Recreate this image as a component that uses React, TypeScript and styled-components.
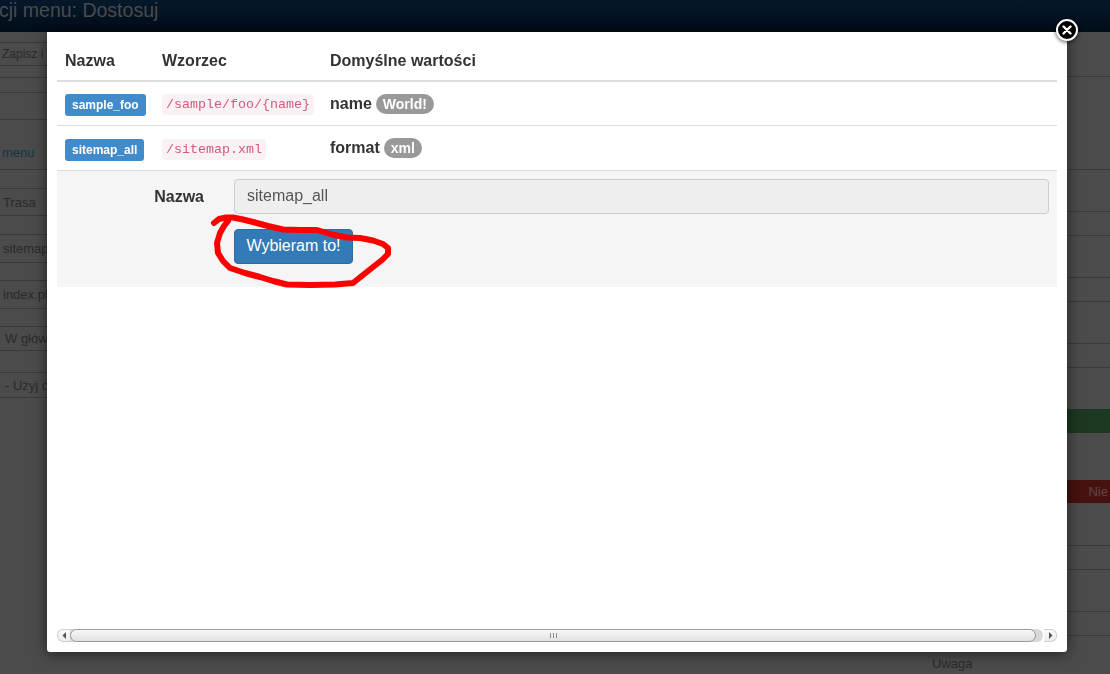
import React from 'react'
import styled, { createGlobalStyle } from 'styled-components'

const GlobalStyle = createGlobalStyle`
  html, body {
    margin: 0;
    padding: 0;
    height: 100%;
    overflow: hidden;
    background: #4b4b4b;
  }
  * {
    box-sizing: border-box;
  }
`

const Page = styled.div`
  width: 1110px;
  height: 674px;
  overflow: hidden;
  font-family: "Liberation Sans", Arial, sans-serif;
  background: #4b4b4b;
`

const Navbar = styled.div`
  height: 32px;
  background: linear-gradient(to bottom, #05192c, #020c17);
  color: #484b4e;
  font-size: 19.5px;
  line-height: 21px;
  text-indent: -1px;
  white-space: nowrap;
  overflow: hidden;
`

const Behind = styled.div`
  display: flex;
  justify-content: space-between;
`

const LeftColumn = styled.div`
  width: 47px;
  overflow: hidden;
`

const RightColumn = styled.div`
  width: 178px;
  overflow: hidden;
`

const BehindRow = styled.div<{ $h: number; $plain?: boolean; $bg?: string; $indent?: number; $size?: number }>`
  height: ${p => p.$h}px;
  display: flex;
  align-items: center;
  padding-left: ${p => p.$indent ?? 3}px;
  font-size: ${p => p.$size ?? 13}px;
  color: #2a2a2a;
  white-space: nowrap;
  background: ${p => p.$bg ?? 'transparent'};
  border-bottom: 1px solid ${p => (p.$plain ? 'transparent' : '#3a3a3a')};
`

const MenuLink = styled.span`
  color: #0f3646;
`

const NieText = styled.span`
  margin-left: auto;
  margin-right: 2px;
  color: #634545;
`

const Modal = styled.div`
  position: fixed;
  left: 47px;
  top: 32px;
  width: 1020px;
  height: 620px;
  padding: 10px;
  background: #fff;
  border-radius: 0 0 3px 3px;
  box-shadow: 0 2px 14px rgba(0, 0, 0, 0.55);
  color: #333;
`

const CloseButton = styled.button`
  position: absolute;
  right: -11px;
  top: -13px;
  width: 22px;
  height: 22px;
  padding: 0;
  border: 2px solid #fff;
  border-radius: 50%;
  background: #000;
  box-shadow: 0 1px 4px rgba(0, 0, 0, 0.7);
  display: flex;
  align-items: center;
  justify-content: center;
`

const Table = styled.table`
  width: 1000px;
  border-collapse: collapse;
  table-layout: fixed;
  font-size: 16px;

  th {
    height: 39px;
    padding: 0 8px;
    text-align: left;
    font-weight: bold;
    border-bottom: 2px solid #ddd;
  }

  td {
    height: 44px;
    padding: 12px 8px 0;
    vertical-align: top;
    border-bottom: 1px solid #ddd;
    font-weight: bold;
    line-height: 20px;
    white-space: nowrap;
  }

  tbody tr:last-child td {
    height: 45px;
  }
`

const RouteLabel = styled.span<{ $low?: boolean }>`
  display: block;
  width: fit-content;
  height: 22px;
  margin-top: ${p => (p.$low ? 1 : 0)}px;
  padding: 0 7px;
  border-radius: 3px;
  background: #428bca;
  color: #fff;
  font-size: 12px;
  font-weight: bold;
  line-height: 22px;
`

const Pattern = styled.code<{ $low?: boolean }>`
  display: block;
  width: fit-content;
  height: 21px;
  margin-top: ${p => (p.$low ? 1 : 0)}px;
  padding: 0 4px;
  border-radius: 4px;
  background: #f9f2f4;
  color: #d6587c;
  font-family: "Liberation Mono", "Courier New", monospace;
  font-size: 13.33px;
  font-weight: normal;
  line-height: 21px;
`

const Badge = styled.span`
  display: inline-block;
  height: 20px;
  margin-left: 4px;
  padding: 0 7px;
  border-radius: 10px;
  background: #999;
  color: #fff;
  font-size: 14px;
  font-weight: bold;
  line-height: 20px;
  vertical-align: top;
`

const FormPanel = styled.form`
  height: 116px;
  padding: 8px 8px 0 0;
  background: #f5f5f5;
`

const FormRow = styled.div`
  display: flex;
  align-items: center;
  margin-bottom: 15px;
`

const FieldLabel = styled.label`
  width: 147px;
  margin-right: 30px;
  padding-top: 1px;
  text-align: right;
  font-size: 16px;
  font-weight: bold;
`

const Input = styled.input`
  flex: 1;
  height: 35px;
  padding: 0 12px;
  border: 1px solid #ccc;
  border-radius: 4px;
  background: #eee;
  color: #555;
  font-family: inherit;
  font-size: 16px;
`

const SubmitButton = styled.button`
  width: 119px;
  height: 35px;
  margin-left: 177px;
  padding: 0;
  border: 1px solid #2e6da4;
  border-radius: 4px;
  background: #337ab7;
  color: #fff;
  font-family: inherit;
  font-size: 16px;
`

const Scrollbar = styled.div`
  position: absolute;
  left: 10px;
  right: 10px;
  bottom: 10px;
  height: 13px;
  display: flex;
`

const ScrollArrow = styled.div`
  width: 13px;
  height: 13px;
  background: linear-gradient(to bottom, #fafafa, #ececec);
  border: 1px solid #cfcfcf;
  display: flex;
  align-items: center;
  justify-content: center;
`

const ArrowLeft = styled(ScrollArrow)`
  border-radius: 6px 0 0 6px;
  border-right: 0;
`

const ArrowRight = styled(ScrollArrow)`
  border-radius: 0 6px 6px 0;
  border-left: 0;
`

const Track = styled.div`
  flex: 1;
  display: flex;
  background: #d9d8d5;
  border-radius: 0 6px 6px 0;
  margin-right: 1px;
`

const Thumb = styled.div`
  width: 966px;
  border: 1px solid #9a9a98;
  border-radius: 7px;
  background: linear-gradient(to bottom, #f7f7f5, #e2e1de);
  display: flex;
  align-items: center;
  justify-content: center;
  gap: 2px;
`

const Grip = styled.i`
  display: block;
  width: 1px;
  height: 5px;
  background: #8f8f8f;
`

const Scribble = styled.svg`
  position: fixed;
  left: 0;
  top: 0;
  pointer-events: none;
`

const leftRows: { h: number; text?: React.ReactNode; plain?: boolean; indent?: number; size?: number }[] = [
  { h: 11 },
  { h: 23, text: 'Zapisz i', indent: 2, size: 12 },
  { h: 12 },
  { h: 15 },
  { h: 27 },
  { h: 15, plain: true },
  { h: 35, text: <MenuLink>menu</MenuLink>, indent: 2 },
  { h: 19 },
  { h: 27, text: 'Trasa' },
  { h: 19 },
  { h: 28, text: 'sitemap' },
  { h: 18 },
  { h: 28, text: 'index.php' },
  { h: 18 },
  { h: 24, text: 'W głównym', indent: 5 },
  { h: 22 },
  { h: 25, text: '- Użyj ok', indent: 5 },
]

const rightRows: { h: number; text?: React.ReactNode; plain?: boolean; bg?: string; indent?: number }[] = [
  { h: 45 },
  { h: 93 },
  { h: 42 },
  { h: 24 },
  { h: 42 },
  { h: 24 },
  { h: 42 },
  { h: 24 },
  { h: 41, plain: true },
  { h: 24, plain: true, bg: '#1c3820' },
  { h: 47, plain: true },
  { h: 23, plain: true, bg: '#451210', text: <NieText>Nie</NieText> },
  { h: 43 },
  { h: 24 },
  { h: 42 },
  { h: 24 },
  { h: 20, plain: true },
  { h: 16, plain: true, text: 'Uwaga', indent: 0 },
]

export default function App() {
  return (
    <Page>
      <GlobalStyle />
      <Navbar>cji menu: Dostosuj</Navbar>
      <Behind>
        <LeftColumn>
          {leftRows.map((r, i) => (
            <BehindRow key={i} $h={r.h} $plain={r.plain} $indent={r.indent} $size={r.size}>
              {r.text}
            </BehindRow>
          ))}
        </LeftColumn>
        <RightColumn>
          {rightRows.map((r, i) => (
            <BehindRow key={i} $h={r.h} $plain={r.plain} $bg={r.bg} $indent={r.indent}>
              {r.text}
            </BehindRow>
          ))}
        </RightColumn>
      </Behind>

      <Modal>
        <CloseButton aria-label="close">
          <svg width="10" height="10" viewBox="0 0 10 10">
            <path d="M1.5 1.5 L8.5 8.5 M8.5 1.5 L1.5 8.5" stroke="#fff" strokeWidth="2.4" strokeLinecap="round" />
          </svg>
        </CloseButton>

        <Table>
          <colgroup>
            <col style={{ width: 97 }} />
            <col style={{ width: 168 }} />
            <col />
          </colgroup>
          <thead>
            <tr>
              <th>Nazwa</th>
              <th>Wzorzec</th>
              <th>Domyślne wartości</th>
            </tr>
          </thead>
          <tbody>
            <tr>
              <td><RouteLabel>sample_foo</RouteLabel></td>
              <td><Pattern>/sample/foo/{'{name}'}</Pattern></td>
              <td>name<Badge>World!</Badge></td>
            </tr>
            <tr>
              <td><RouteLabel $low>sitemap_all</RouteLabel></td>
              <td><Pattern $low>/sitemap.xml</Pattern></td>
              <td>format<Badge>xml</Badge></td>
            </tr>
          </tbody>
        </Table>

        <FormPanel>
          <FormRow>
            <FieldLabel>Nazwa</FieldLabel>
            <Input readOnly value="sitemap_all" />
          </FormRow>
          <SubmitButton type="button">Wybieram to!</SubmitButton>
        </FormPanel>

        <Scrollbar>
          <ArrowLeft>
            <svg width="5" height="7" viewBox="0 0 5 7"><path d="M4 0 L0.5 3.5 L4 7 Z" fill="#555" /></svg>
          </ArrowLeft>
          <Track>
            <Thumb>
              <Grip />
              <Grip />
              <Grip />
            </Thumb>
          </Track>
          <ArrowRight>
            <svg width="5" height="7" viewBox="0 0 5 7"><path d="M1 0 L4.5 3.5 L1 7 Z" fill="#555" /></svg>
          </ArrowRight>
        </Scrollbar>
      </Modal>

      <Scribble width="1110" height="674" viewBox="0 0 1110 674">
        <path
          d="M214 223 L219 219 L226 217.5 L233 217.5 L243 219.5 L253 222 L268 226 L283 229.5 L300 230 L317 230 L332 234.5 L347 237.5 L360 238 L373 240.5 L383 244 L388 248 L388 254 L382 260 L373 267 L363 275 L353 283 L335 284.5 L310 285 L287 284.5 L273 281 L260 277 L245 273 L230 268 L223 261 L218 253 L217 243 L220 233 L224 226 L228 221"
          fill="none"
          stroke="#f00"
          strokeWidth="6"
          strokeLinecap="round"
          strokeLinejoin="round"
        />
      </Scribble>
    </Page>
  )
}
